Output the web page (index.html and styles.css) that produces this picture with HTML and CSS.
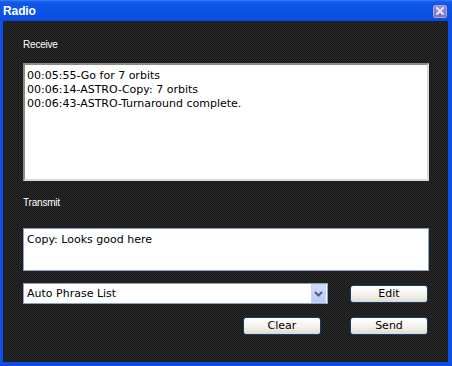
FILE: index.html
```html
<!DOCTYPE html>
<html>
<head>
<meta charset="utf-8">
<link rel="stylesheet" href="styles.css">
</head>
<body>
<div class="window">
  <div class="titlebar">
    <span class="title">Radio</span>
    <span class="close">
      <svg width="8" height="8" viewBox="0 0 8 8"><path d="M1 1L7 7M7 1L1 7" stroke="#e4e2f4" stroke-width="2" stroke-linecap="square"/></svg>
    </span>
  </div>
  <div class="body">
    <div class="label label-receive">Receive</div>
    <div class="box receive">
      <div>00:05:55-Go for 7 orbits</div>
      <div>00:06:14-ASTRO-Copy: 7 orbits</div>
      <div>00:06:43-ASTRO-Turnaround complete.</div>
    </div>
    <div class="label label-transmit">Transmit</div>
    <div class="box transmit">Copy: Looks good here</div>
    <div class="row row-top">
      <div class="select">
        <span class="select-text">Auto Phrase List</span>
        <span class="arrow">
          <svg width="9" height="6" viewBox="0 0 9 6"><path d="M1 1L4.5 4.5L8 1" fill="none" stroke="#4d6185" stroke-width="2"/></svg>
        </span>
      </div>
      <button class="btn">Edit</button>
    </div>
    <div class="row row-bottom">
      <button class="btn">Clear</button>
      <button class="btn">Send</button>
    </div>
  </div>
</div>
</body>
</html>
```
FILE: styles.css
```css
html, body {
  margin: 0;
  padding: 0;
  background: #1e1e1e;
}
.window {
  width: 452px;
  height: 366px;
  display: flex;
  flex-direction: column;
  font-family: "Liberation Sans", Arial, sans-serif;
}
.titlebar {
  height: 21px;
  flex: none;
  display: flex;
  align-items: center;
  justify-content: space-between;
  padding: 0 5px 0 3px;
  background: linear-gradient(#4a8ef8 0, #1a62f0 1px, #0f58ec 3px, #0b52e6 50%, #0a4ee0 100%);
  box-sizing: border-box;
}
.title {
  color: #fff;
  font-weight: bold;
  font-size: 12px;
  letter-spacing: -0.1px;
  margin-top: 1px;
}
.close {
  width: 14px;
  height: 13px;
  box-sizing: border-box;
  border: 1px solid #a9a3dc;
  border-radius: 2px;
  background: linear-gradient(#978ed0, #7d73bb);
  display: flex;
  align-items: center;
  justify-content: center;
  margin-top: 1px;
}
.body {
  flex: 1;
  display: flex;
  flex-direction: column;
  border-left: 3px solid #0c52e8;
  border-right: 4px solid #0c52e8;
  border-bottom: 4px solid #0a4ee0;
  padding: 17px 0 0 20px;
  background-color: #1f1f1f;
  background-image: repeating-conic-gradient(#282828 0 25%, #191919 0 50%);
  background-size: 2px 2px;
}
.label {
  color: #fff;
  font-size: 10px;
  line-height: 13px;
  height: 13px;
  letter-spacing: -0.2px;
}
.box {
  width: 406px;
  box-sizing: border-box;
  background: #fff;
  color: #000;
  font-family: "DejaVu Sans", Verdana, sans-serif;
  font-size: 11px;
  line-height: 14px;
  padding: 3px 2px;
}
.receive {
  margin-top: 12px;
  height: 118px;
  border: 2px solid;
  border-color: #8a8a86 #dcdad2 #dcdad2 #8a8a86;
  padding-top: 4px;
}
.label-transmit {
  margin-top: 15px;
}
.transmit {
  margin-top: 19px;
  height: 43px;
  border: 1px solid #8aa2c4;
  padding: 4px 3px;
}
.row {
  display: flex;
  align-items: center;
  width: 405px;
}
.row-top {
  margin-top: 12px;
  height: 21px;
}
.row-bottom {
  margin-top: 13px;
  justify-content: flex-end;
  gap: 29px;
}
.select {
  width: 305px;
  height: 21px;
  box-sizing: border-box;
  border: 1px solid #8aa2c4;
  background: #fff;
  display: flex;
  align-items: center;
  justify-content: space-between;
  padding: 0 1px 0 3px;
  margin-right: 22px;
}
.select-text {
  font-family: "DejaVu Sans", Verdana, sans-serif;
  font-size: 11px;
  color: #000;
}
.arrow {
  width: 15px;
  height: 19px;
  box-sizing: border-box;
  background: linear-gradient(#d2defc, #b7cbf6);
  border: 1px solid #c6d4f6;
  display: flex;
  align-items: center;
  justify-content: center;
}
.btn {
  width: 78px;
  height: 18px;
  box-sizing: border-box;
  border: 1px solid #1c3a66;
  border-radius: 3px;
  background: linear-gradient(#ffffff, #f1f0ea 60%, #dcd9cf);
  font-family: "DejaVu Sans", Verdana, sans-serif;
  font-size: 11px;
  color: #000;
  padding: 0;
  margin: 0;
  line-height: 16px;
}
```
